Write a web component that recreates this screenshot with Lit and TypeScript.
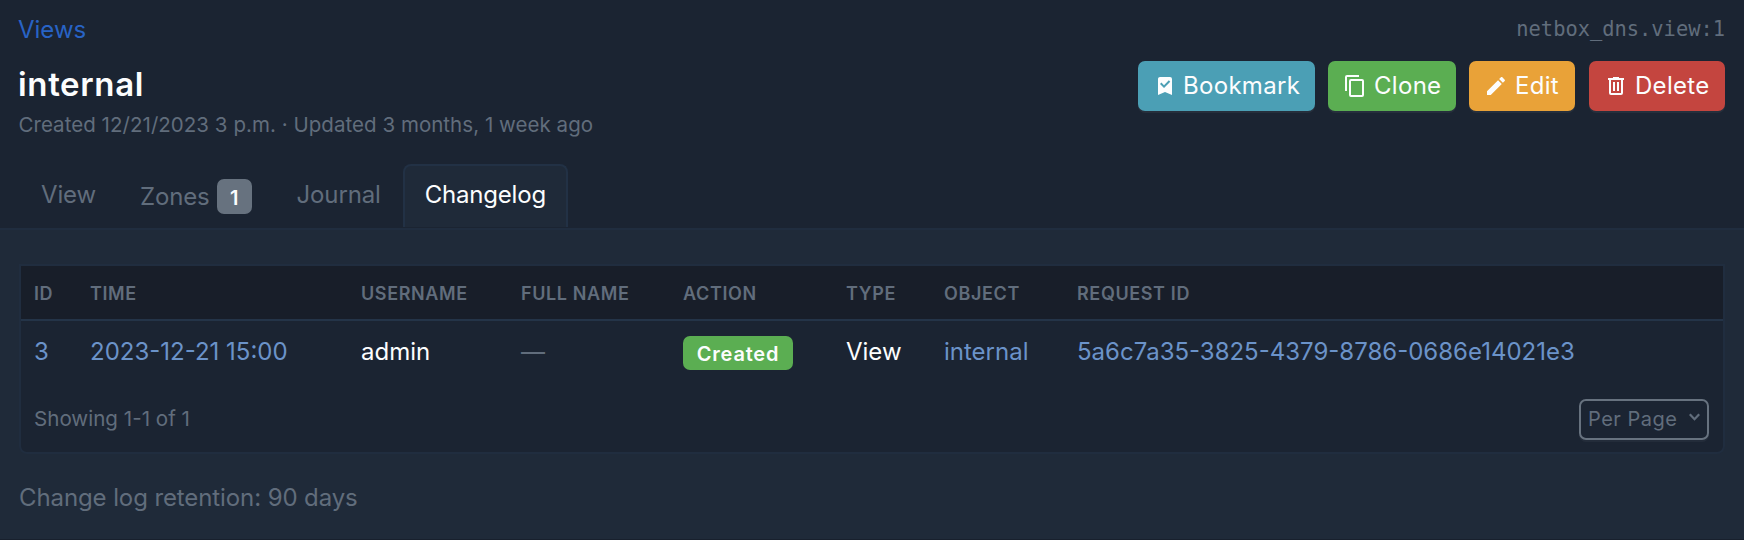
import { LitElement, html, css, svg } from "lit";
import { customElement } from "lit/decorators.js";

const icons = {
  bookmark: svg`<path d="M17,3A2,2 0 0,1 19,5V21L12,18L5,21V5C5,3.89 5.9,3 7,3H17M11,14L17.25,7.76L15.84,6.34L11,11.18L8.41,8.59L7,10L11,14Z"/>`,
  clone: svg`<path d="M19,21H8V7H19M19,5H8A2,2 0 0,0 6,7V21A2,2 0 0,0 8,23H19A2,2 0 0,0 21,21V7A2,2 0 0,0 19,5M16,1H4A2,2 0 0,0 2,3V17H4V3H16V1Z"/>`,
  edit: svg`<path d="M20.71,7.04C21.1,6.65 21.1,6 20.71,5.63L18.37,3.29C18,2.9 17.35,2.9 16.96,3.29L15.12,5.12L18.87,8.87M3,17.25V21H6.75L17.81,9.93L14.06,6.18L3,17.25Z"/>`,
  trash: svg`<path d="M9,3V4H4V6H5V19A2,2 0 0,0 7,21H17A2,2 0 0,0 19,19V6H20V4H15V3H9M7,6H17V19H7V6M9,8V17H11V8H9M13,8V17H15V8H13Z"/>`,
};

const actions = [
  { label: "Bookmark", tone: "cyan", icon: icons.bookmark },
  { label: "Clone", tone: "green", icon: icons.clone },
  { label: "Edit", tone: "yellow", icon: icons.edit },
  { label: "Delete", tone: "red", icon: icons.trash },
];

@customElement("app-root")
export class AppRoot extends LitElement {
  static styles = css`
    :host {
      display: flex;
      flex-direction: column;
      box-sizing: border-box;
      height: 540px;
      overflow: hidden;
      background: #1b2432;
      border-bottom: 1px solid #18202d;
      color: #fcfdfe;
      font: 400 24px/34px Inter, "Noto Sans", sans-serif;
      font-optical-sizing: none;
      white-space: nowrap;
      -webkit-font-smoothing: antialiased;
    }
    * { box-sizing: border-box; }
    .header { display: flex; justify-content: space-between; height: 164px; padding: 13px 19px 0 18px; }
    .crumb { height: 46px; color: #2863c5; }
    .title { margin: 0; font-size: 33px; font-weight: 600; line-height: 50px; height: 50px; letter-spacing: .65px; }
    .meta { font-size: 20.5px; line-height: 31px; padding-left: .5px; letter-spacing: .04px; color: #616d7c; }
    .side { display: flex; flex-direction: column; align-items: flex-end; }
    .ident { height: 48px; font: 400 20.4px/33px "DejaVu Sans Mono", monospace; color: #616d7c; }
    .actions { display: flex; gap: 13px; }
    .btn { display: flex; align-items: center; height: 50px; padding-left: 15px; border-radius: 7px; letter-spacing: .3px; gap: 7px; box-shadow: 0 2px 0 rgba(255,255,255,.05); }
    .btn svg { width: 24px; height: 24px; fill: currentColor; }
    .cyan { width: 177px; gap: 6px; background: #4b9fb5; }
    .green { width: 128px; background: #5bae52; }
    .yellow { width: 106px; background: #e9a238; margin-right: 1px; }
    .red { width: 136px; background: #c4453f; }
    .tabs { display: flex; height: 64px; padding-left: 19px; color: #616d7c; letter-spacing: -.15px; }
    .tab { display: flex; align-items: center; padding: 0 22px 1px; height: 63px; }
    .counted { padding: 3px 23px 0 22px; }
    .on { background: #1f2a39; color: #fcfdfe; border: 2px solid #223145; border-bottom: 0; border-radius: 8px 8px 0 0; padding: 0 20px 3px; letter-spacing: -.2px; }
    .count { width: 35px; height: 35px; margin: -2px 0 0 7px; border-radius: 7px; background: #67727f; color: #fcfdfe; font-size: 20px; font-weight: 600; line-height: 38px; text-align: center; }
    .body { flex: 1; background: #1f2a39; border-top: 2px solid #202d3f; padding: 34px 19px 0; }
    .card { height: 190px; border: 2px solid #202d3f; border-radius: 0 0 8px 8px; overflow: hidden; background: #1b2432; }
    .grid { display: grid; grid-template-columns: 56px 271px 160px 162px 163px 98px 133px 1fr; padding-left: 13px; align-items: center; }
    .head { height: 55px; padding-top: 2px; background: #181e29; border-bottom: 2px solid #243448; color: #616d7c; font-size: 18px; font-weight: 600; letter-spacing: .62px; }
    .row { height: 61px; }
    .link { color: #6b93c9; }
    .dim { color: #616d7c; }
    .status { display: inline-block; width: 110px; height: 34px; margin-top: 2px; border-radius: 7px; background: #5bae52; font-size: 20px; font-weight: 600; line-height: 36px; letter-spacing: .8px; text-align: center; }
    .foot { display: flex; justify-content: space-between; align-items: center; padding: 3px 14px 0 13px; height: 71px; color: #616d7c; font-size: 20.6px; }
    .pick { display: flex; align-items: center; justify-content: space-between; width: 130px; height: 41px; padding: 0 6px 0 7px; border: 2px solid #67727f; border-radius: 7px; font-size: 20px; letter-spacing: .5px; box-shadow: 0 2px 0 rgba(255,255,255,.04); }
    .pick svg { width: 13px; height: 12px; margin-bottom: 4px; fill: none; stroke: currentColor; stroke-width: 2.2; }
    .note { margin-top: 27px; color: #616d7c; letter-spacing: -.1px; }
  `;

  render() {
    return html`
      <header class="header">
        <div>
          <div class="crumb">Views</div>
          <h1 class="title">internal</h1>
          <div class="meta">Created 12/21/2023 3 p.m. · Updated 3 months, 1 week ago</div>
        </div>
        <div class="side">
          <div class="ident">netbox_dns.view:1</div>
          <div class="actions">
            ${actions.map(a => html`<div class="btn ${a.tone}"><svg viewBox="0 0 24 24">${a.icon}</svg><span>${a.label}</span></div>`)}
          </div>
        </div>
      </header>
      <nav class="tabs">
        <div class="tab">View</div>
        <div class="tab counted">Zones<span class="count">1</span></div>
        <div class="tab">Journal</div>
        <div class="tab on">Changelog</div>
      </nav>
      <main class="body">
        <section class="card">
          <div class="grid head">
            ${["ID", "TIME", "USERNAME", "FULL NAME", "ACTION", "TYPE", "OBJECT", "REQUEST ID"].map(t => html`<span>${t}</span>`)}
          </div>
          <div class="grid row">
            <span class="link">3</span><span class="link">2023-12-21 15:00</span><span>admin</span>
            <span class="dim">—</span><span class="status">Created</span><span>View</span>
            <span class="link">internal</span><span class="link">5a6c7a35-3825-4379-8786-0686e14021e3</span>
          </div>
          <div class="foot">
            <span>Showing 1-1 of 1</span>
            <div class="pick"><span>Per Page</span><svg viewBox="0 0 13 12"><path d="M1.8 3.2l4.7 5 4.7-5"/></svg></div>
          </div>
        </section>
        <div class="note">Change log retention: 90 days</div>
      </main>
    `;
  }
}
